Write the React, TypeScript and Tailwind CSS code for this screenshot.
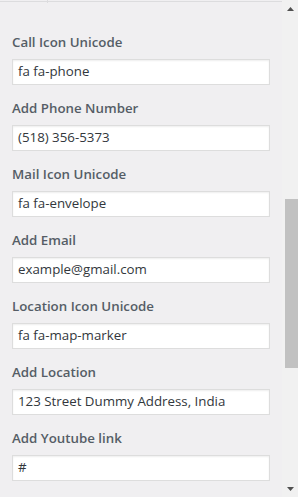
import React from "react";

const fields = [
  { label: "Call Icon Unicode", value: "fa fa-phone" },
  { label: "Add Phone Number", value: "(518) 356-5373" },
  { label: "Mail Icon Unicode", value: "fa fa-envelope" },
  { label: "Add Email", value: "example@gmail.com" },
  { label: "Location Icon Unicode", value: "fa fa-map-marker" },
  { label: "Add Location", value: "123 Street Dummy Address, India" },
  { label: "Add Youtube link", value: "#" },
];

export default function App() {
  return (
    <div
      className="flex w-[298px] h-[497px] overflow-hidden bg-[#f0eff1]"
      style={{ fontFamily: '"Open Sans", "Noto Sans", sans-serif' }}
    >
      <div className="flex flex-col w-[282px] h-full">
        <div className="flex h-[2px] border-b border-[#dcdcde] shrink-0">
          <div className="w-[48px] h-[3px] border-r border-[#dcdcde]" />
        </div>
        <div className="flex flex-col pt-[30px] pl-[12px] pr-[12px]">
          {fields.map((f) => (
            <div key={f.label} className="flex flex-col mb-[13px]">
              <div className="h-[20px] leading-[20px] text-[13.3px] font-semibold text-[#555d66] mb-[7px]">
                {f.label}
              </div>
              <div className="h-[26px] flex items-center bg-white border border-[#dddddd] shadow-[inset_0_1px_2px_rgba(0,0,0,0.07)] pl-[5px] text-[13.3px] text-[#32373c]">
                {f.value}
              </div>
            </div>
          ))}
        </div>
      </div>
      <div className="flex flex-col w-[16px] h-full bg-[#f1f1f1] items-center">
        <div className="h-[17px] flex items-center justify-center">
          <svg width="7" height="4" viewBox="0 0 7 4">
            <polygon points="3.5,0 7,4 0,4" fill="#505050" />
          </svg>
        </div>
        <div className="h-[182px]" />
        <div className="w-[13px] h-[169px] bg-[#c1c1c1] ml-[3px]" />
        <div className="flex-1" />
        <div className="h-[17px] flex items-center justify-center">
          <svg width="7" height="4" viewBox="0 0 7 4">
            <polygon points="0,0 7,0 3.5,4" fill="#505050" />
          </svg>
        </div>
      </div>
    </div>
  );
}
